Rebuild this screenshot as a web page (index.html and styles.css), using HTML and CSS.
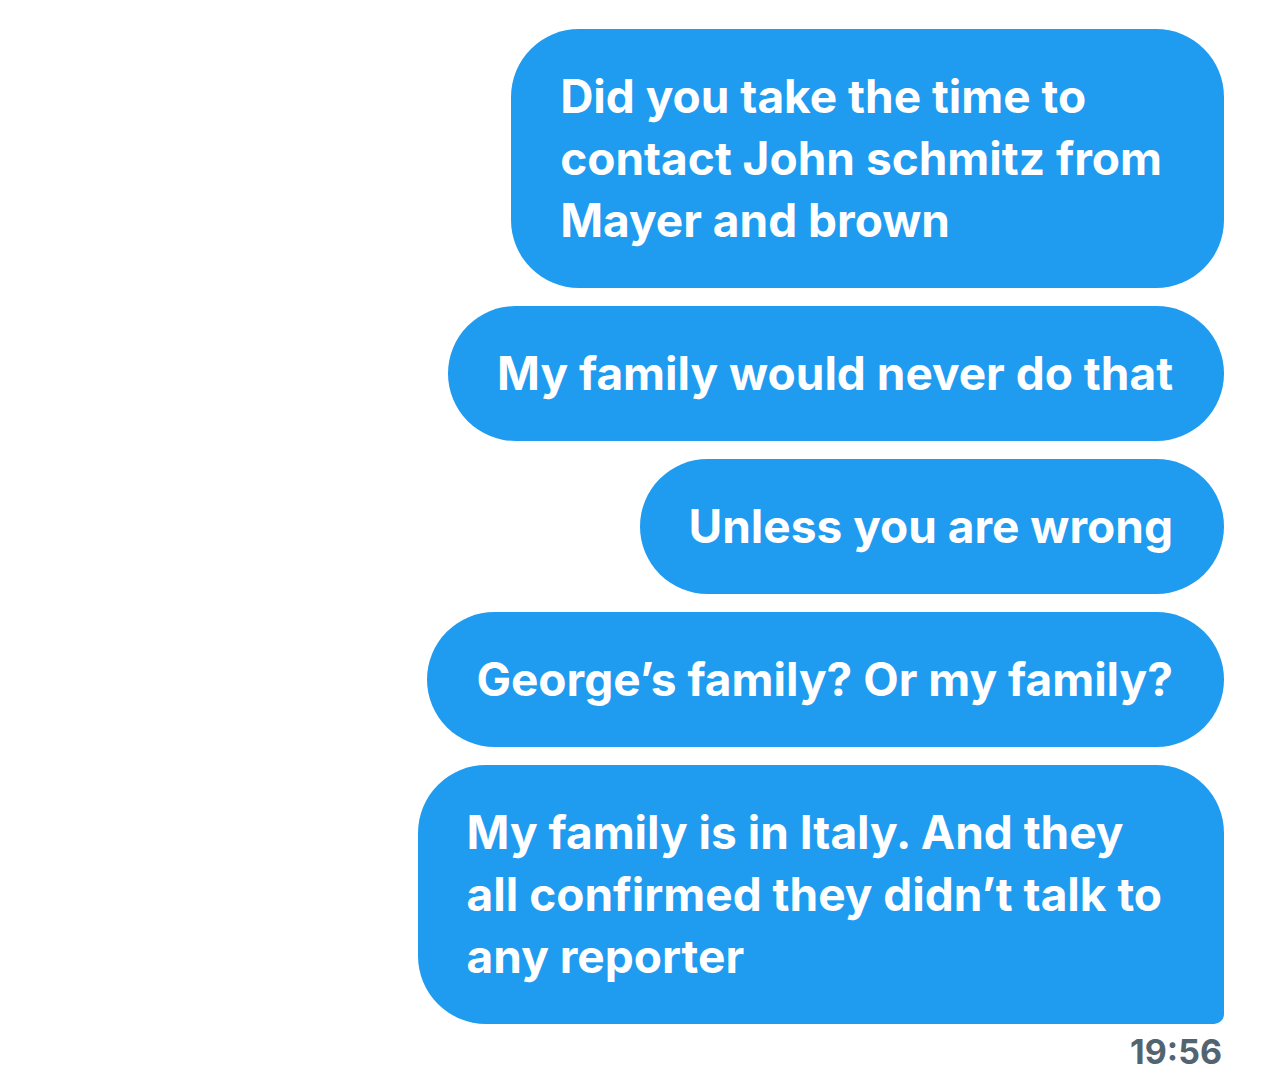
FILE: index.html
```html
<!DOCTYPE html>
<html lang="en">
<head>
<meta charset="utf-8">
<title>Messages</title>
<link rel="stylesheet" href="styles.css">
</head>
<body>
<main class="thread">
  <div class="bubble wide">Did you take the time to<br>contact John schmitz from<br>Mayer and brown</div>
  <div class="bubble">My family would never do that</div>
  <div class="bubble">Unless you are wrong</div>
  <div class="bubble">George’s family? Or my family?</div>
  <div class="bubble wide last">My family is in Italy. And they<br>all confirmed they didn’t talk to<br>any reporter</div>
  <div class="time">19:56</div>
</main>
</body>
</html>
```
FILE: styles.css
```css
html, body {
  margin: 0;
  padding: 0;
  background: #ffffff;
}
.thread {
  display: flex;
  flex-direction: column;
  align-items: flex-end;
  gap: 18px;
  padding: 29px 60px 0 0;
  font-family: "Inter", "Liberation Sans", sans-serif;
}
.bubble {
  background: #1f9bf0;
  color: #ffffff;
  font-weight: 700;
  font-size: 46px;
  line-height: 62px;
  padding: 36px 51px 37px 49px;
  border-radius: 68px;
  white-space: nowrap;
}
.wide {
  padding-right: 62px;
}
.last {
  border-bottom-right-radius: 10px;
}
.time {
  margin-top: -10px;
  font-size: 34px;
  font-weight: 700;
  color: #536471;
  line-height: 40px;
  padding-right: 2px;
}
```
